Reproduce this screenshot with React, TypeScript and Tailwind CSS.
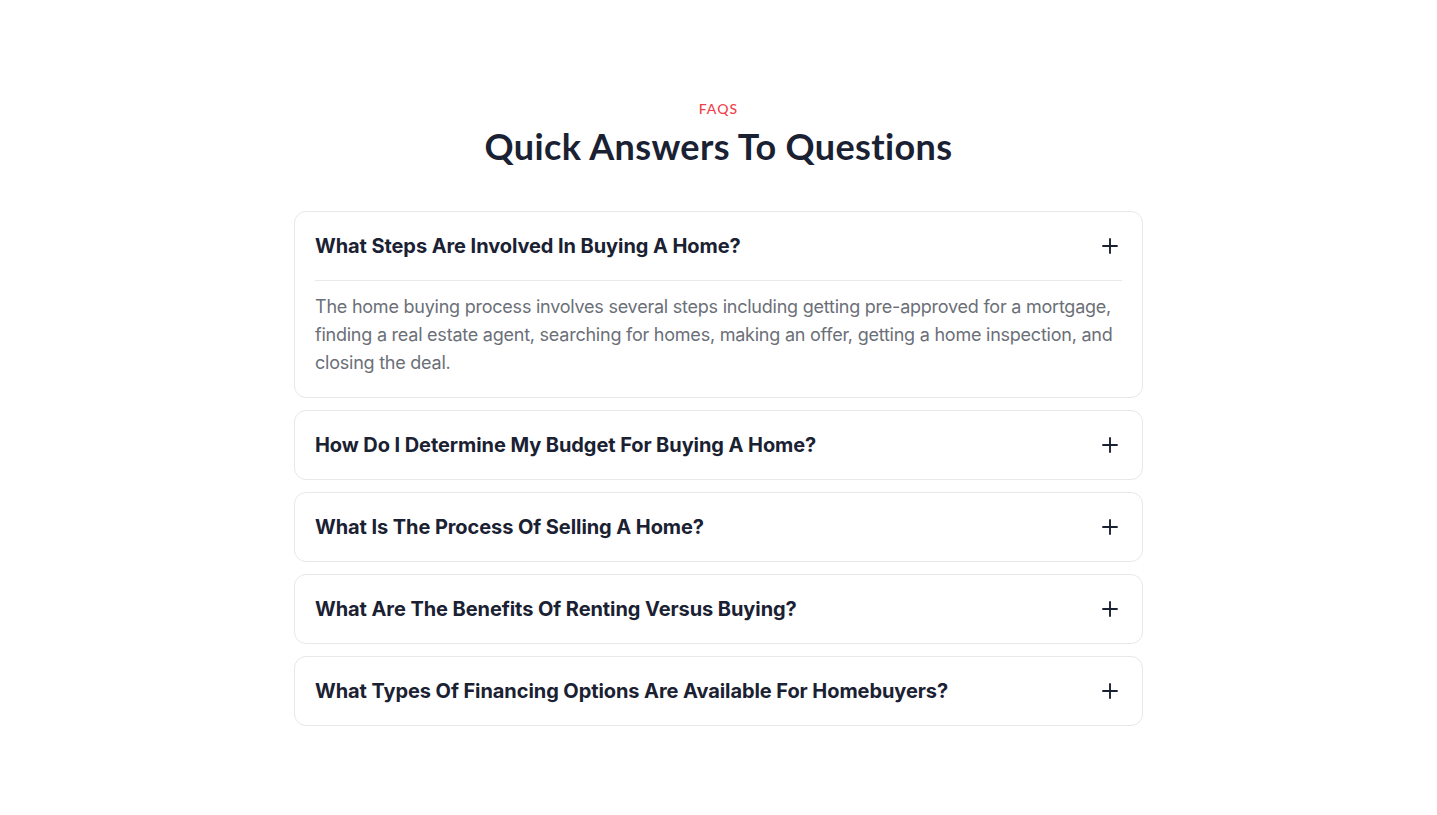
import { Plus } from "lucide-react";

const faqs = [
  {
    q: "What Steps Are Involved In Buying A Home?",
    a: "The home buying process involves several steps including getting pre-approved for a mortgage, finding a real estate agent, searching for homes, making an offer, getting a home inspection, and closing the deal.",
    open: true,
  },
  { q: "How Do I Determine My Budget For Buying A Home?", a: "", open: false },
  { q: "What Is The Process Of Selling A Home?", a: "", open: false },
  { q: "What Are The Benefits Of Renting Versus Buying?", a: "", open: false },
  { q: "What Types Of Financing Options Are Available For Homebuyers?", a: "", open: false },
];

export default function App() {
  return (
    <div className="min-h-screen bg-white font-['Inter',sans-serif]">
      <section className="mx-auto w-[849px] pt-[100px] pb-20">
        <div className="text-center">
          <p className="text-[14px] leading-[18px] font-medium tracking-[0.08em] text-[#ef3f49] font-['Lato',sans-serif]">
            FAQS
          </p>
          <h2 className="mt-[7px] text-[36px] leading-[42px] font-bold text-[#1a2132] font-['Lato',sans-serif] tracking-[0.01em]">
            Quick Answers To Questions
          </h2>
        </div>

        <div className="mt-[44px] flex flex-col gap-3">
          {faqs.map((f) => (
            <div key={f.q} className="rounded-xl border border-[#e7e8ea] bg-white">
              <div className="flex items-center justify-between px-5 py-5">
                <h3 className="text-[20px] leading-7 font-bold text-[#1a2132] tracking-[-0.004em]">{f.q}</h3>
                <Plus className="h-6 w-6 text-[#1a2132]" strokeWidth={1.9} />
              </div>
              {f.open && (
                <div className="mx-5 border-t border-[#e7e8ea] pt-3 pb-5">
                  <p className="text-[18px] leading-7 text-[#6b6f78] tracking-[-0.013em]">{f.a}</p>
                </div>
              )}
            </div>
          ))}
        </div>
      </section>
    </div>
  );
}
